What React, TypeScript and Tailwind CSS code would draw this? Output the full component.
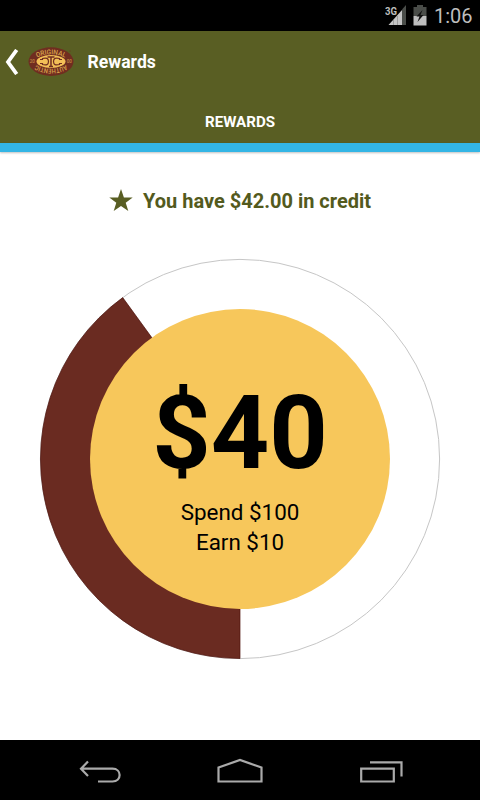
function StatusBar() {
  return (
    <div className="flex h-[31px] shrink-0 items-center justify-end bg-black pr-[8px] pt-[1px] text-[#bebebe]">
      <svg width="22" height="22" viewBox="0 0 22 22" className="mr-[6px]">
        <text x="0" y="9.500" fontSize="11.500" fontWeight="700" textLength="12" lengthAdjust="spacingAndGlyphs" fill="#bebebe">3G</text>
        <path d="M17 4.500L21 0V20H17Z" fill="#4a4d49" />
        <path d="M3.500 20L17 5V20Z" fill="#c4c4c4" />
        <path d="M8.500 15V20M12.500 11V20" stroke="#8a8a8a" strokeWidth=".7" />
      </svg>
      <svg width="14" height="22" viewBox="0 0 14 22" className="mr-[7px]">
        <path d="M4 0H10V2H13.500V11H.5V2H4Z" fill="#4a4d49" />
        <path d="M.5 11H13.500V20.500H.5Z" fill="#bebebe" />
        <path d="M9.500 5L3.500 11.500H6.500L4.500 17L10.500 10H7.500Z" fill="#111" />
      </svg>
      <span className="w-[38px] whitespace-nowrap text-[20px] leading-[31px]">1:06</span>
    </div>
  );
}

function Logo() {
  return (
    <svg width="48" height="32" viewBox="0 0 48 32" className="ml-[8px]">
      <defs>
        <path id="upper" d="M9.500 11.800Q24 4.800 38.500 11.800" />
        <path id="lower" d="M38.500 19.200Q24 26.200 9.500 19.200" />
      </defs>
      <ellipse cx="24" cy="15.600" rx="22.500" ry="14.300" fill="#702d20" />
      <ellipse cx="24" cy="15.500" rx="14.500" ry="6.500" fill="#f3bf57" />
      <g fill="none" stroke="#702d20" strokeWidth="1.200">
        <path d="M13 13.500H15.500V12.500Q21.500 10.800 21.500 15.500Q21.500 20.200 15.500 18.500V17.500H13" />
        <path d="M35 13.500H32.500V12.500Q26.500 10.800 26.500 15.500Q26.500 20.200 32.500 18.500V17.500H35" />
        <path d="M24 11V20M20.500 11H27.500M22 20.500H26" strokeWidth="1.500" />
      </g>
      <g fill="#d9a34c" fontSize="6.800" fontWeight="500">
        <text textAnchor="middle"><textPath href="#upper" startOffset="50%" textLength="29" lengthAdjust="spacingAndGlyphs">ORIGINAL</textPath></text>
        <text textAnchor="middle"><textPath href="#lower" startOffset="50%" textLength="31" lengthAdjust="spacingAndGlyphs">AUTHENTIC</textPath></text>
        <text x="2.800" y="17" fontSize="4.500" opacity=".8">20</text>
        <text x="39.800" y="17" fontSize="4.500" opacity=".8">00</text>
      </g>
      <circle cx="43" cy="5" r=".6" fill="#702d20" />
    </svg>
  );
}

function Header() {
  return (
    <header className="shrink-0 bg-[#595e23] text-white">
      <div className="flex h-[62px] items-center pl-[5px]">
        <svg width="14" height="26" viewBox="0 0 14 26" fill="none" stroke="#fff" strokeWidth="3.800">
          <path d="M11.700 1L3 13L11.700 25" />
        </svg>
        <Logo />
        <h1 className="ml-[12.500px] text-[17.600px] font-bold leading-[62px]">Rewards</h1>
      </div>
      <div className="flex h-[50px] items-center justify-center pt-[10px] text-[15.100px] font-bold leading-none">REWARDS</div>
      <div className="h-[9px] bg-[#33b5e5] shadow-[0_1px_2px_rgba(0,0,0,0.25)]" />
    </header>
  );
}

function Progress() {
  return (
    <div className="relative ml-[39px] mt-[36px] h-[402px] w-[402px]">
      <svg width="402" height="402" viewBox="-201 -201 402 402" className="absolute inset-0">
        <circle r="199.600" fill="white" stroke="#c6c6c6" strokeWidth="1" />
        <path d="M0 0V199.500A199.500 199.500 0 0 1 -117.260 -161.400Z" fill="#6a2b21" stroke="#4d120d" strokeWidth=".7" />
        <circle r="150" fill="#f7c75b" />
      </svg>
      <div className="relative flex flex-col items-center pt-[115px] text-black">
        <div className="h-[124px] text-[102px] font-bold leading-[120px]">$40</div>
        <div className="text-center text-[22.400px] leading-[30px]">
          <p>Spend $100</p>
          <p>Earn $10</p>
        </div>
      </div>
    </div>
  );
}

function NavBar() {
  return (
    <nav className="flex h-[60px] shrink-0 items-center justify-between bg-black px-[76px]">
      <svg width="48" height="60" viewBox="76 740 48 60" fill="none" stroke="#aaa" strokeWidth="2.200">
        <path d="M88 761.500L81 768.700L88 776M81 768.700H112.500C122 768.700 122 781.500 112.500 781.500H98" />
      </svg>
      <svg width="48" height="60" viewBox="216 740 48 60" fill="none" stroke="#aaa" strokeWidth="2.200" className="mr-[4px]">
        <path d="M218.500 767.500L240 760L261.500 767.500V781.500H218.500Z" />
      </svg>
      <svg width="44" height="60" viewBox="360 740 44 60" fill="none" stroke="#aaa" strokeWidth="2.200">
        <path d="M361.200 768.700H393.800V781.500H361.200ZM370 762.300H401.500V776.500" />
      </svg>
    </nav>
  );
}

export default function App() {
  return (
    <div className="flex h-[800px] w-[480px] flex-col overflow-hidden bg-white font-[Roboto,sans-serif]">
      <StatusBar />
      <Header />
      <main className="flex-1">
        <div className="flex h-[70px] items-end pl-[109px]">
          <svg width="24" height="23" viewBox="0 0 24 23" className="mb-[10px]" fill="#595e23">
            <path d="M12 0L14.900 8.400H23.700L16.700 13.700L19.300 22L12 17L4.700 22L7.300 13.700L.3 8.400H9.100Z" />
          </svg>
          <p className="ml-[10px] whitespace-nowrap text-[20px] font-bold leading-[42px] text-[#535a1d]">You have $42.00 in credit</p>
        </div>
        <Progress />
      </main>
      <NavBar />
    </div>
  );
}
